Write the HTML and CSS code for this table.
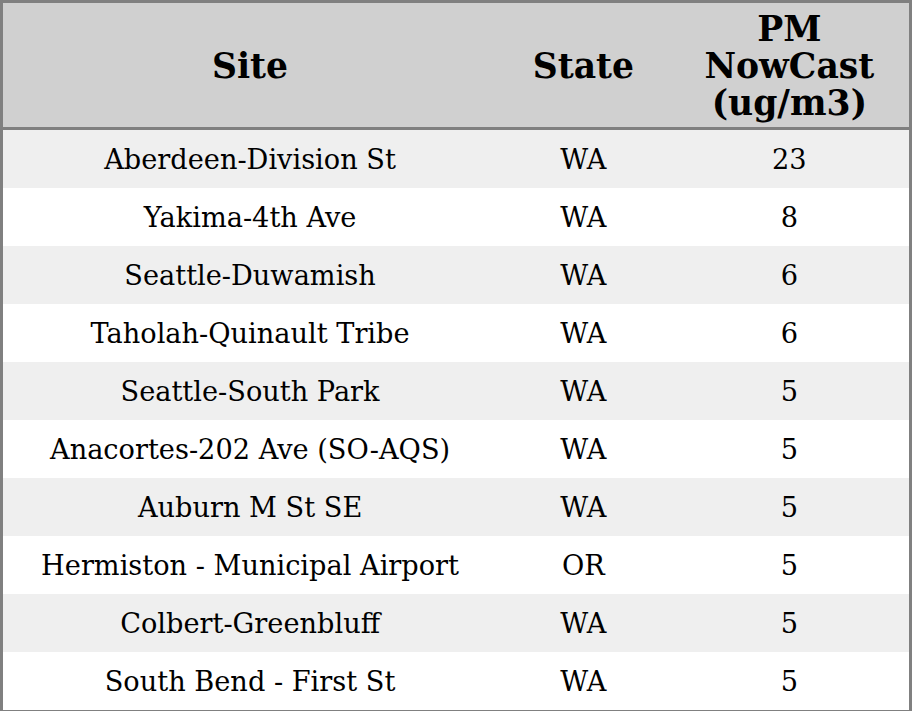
FILE: index.html
```html
<!DOCTYPE html>
<html>
<head>
<meta charset="utf-8">
<link rel="stylesheet" href="styles.css">
</head>
<body>
<table class="aq">
  <colgroup>
    <col class="c-site">
    <col class="c-state">
    <col class="c-pm">
  </colgroup>
  <thead>
    <tr><th>Site</th><th>State</th><th>PM<br>NowCast<br>(ug/m3)</th></tr>
  </thead>
  <tbody>
    <tr><td>Aberdeen-Division St</td><td>WA</td><td>23</td></tr>
    <tr><td>Yakima-4th Ave</td><td>WA</td><td>8</td></tr>
    <tr><td>Seattle-Duwamish</td><td>WA</td><td>6</td></tr>
    <tr><td>Taholah-Quinault Tribe</td><td>WA</td><td>6</td></tr>
    <tr><td>Seattle-South Park</td><td>WA</td><td>5</td></tr>
    <tr><td>Anacortes-202 Ave (SO-AQS)</td><td>WA</td><td>5</td></tr>
    <tr><td>Auburn M St SE</td><td>WA</td><td>5</td></tr>
    <tr><td>Hermiston - Municipal Airport</td><td>OR</td><td>5</td></tr>
    <tr><td>Colbert-Greenbluff</td><td>WA</td><td>5</td></tr>
    <tr><td>South Bend - First St</td><td>WA</td><td>5</td></tr>
  </tbody>
</table>
</body>
</html>
```
FILE: styles.css
```css
html, body {
  margin: 0;
  padding: 0;
  background: #ffffff;
}
.aq {
  width: 912px;
  height: 711px;
  border-collapse: collapse;
  table-layout: fixed;
  border: 3px solid #808080;
  font-family: "DejaVu Serif", serif;
  color: #000;
}
.c-site { width: 494px; }
.c-state { width: 172px; }
.c-pm { width: 240px; }
.aq th {
  background: #d0d0d0;
  font-size: 34.6px;
  font-weight: bold;
  line-height: 37px;
  height: 112px;
  padding: 7px 4px 5px;
  text-align: center;
  vertical-align: middle;
  border-bottom: 3px solid #808080;
}
.aq td {
  font-size: 27.2px;
  line-height: 30px;
  height: 30px;
  padding: 15px 4px 13px;
  text-align: center;
  vertical-align: middle;
}
.aq tbody tr:nth-child(odd) td { background: #efefef; }
.aq tbody tr:nth-child(even) td { background: #ffffff; }
```
